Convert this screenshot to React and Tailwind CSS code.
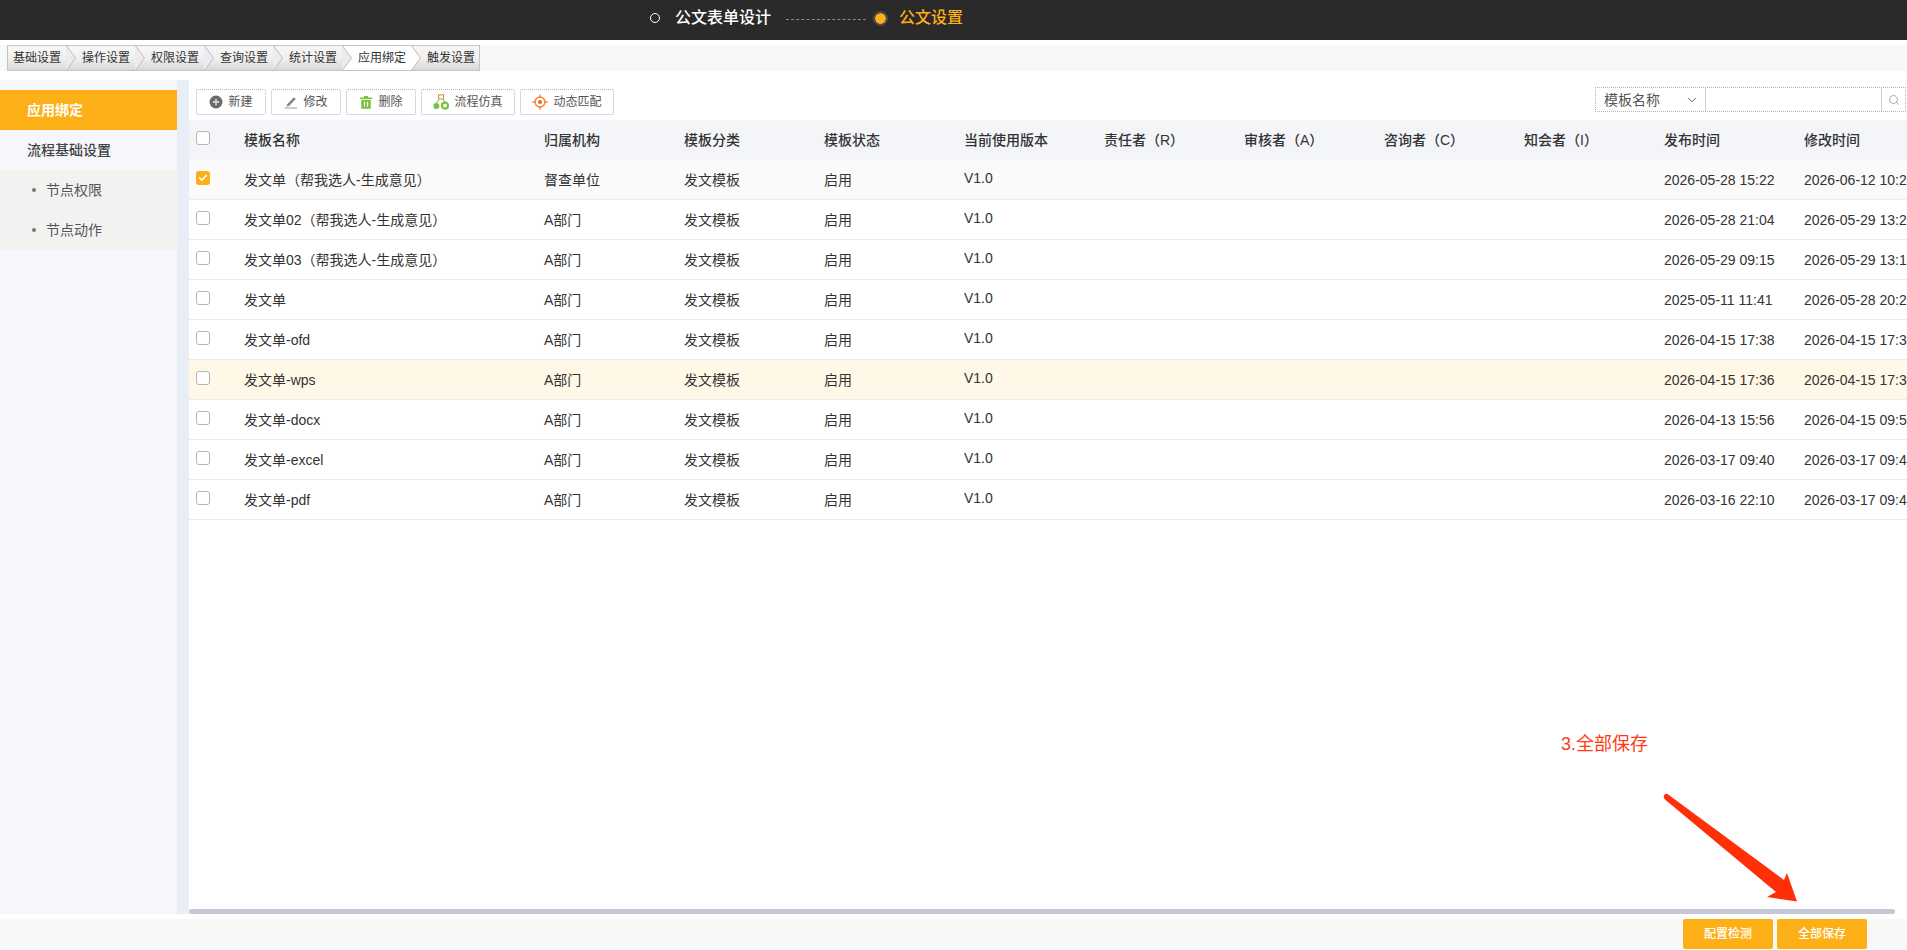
import { ChevronDown, Search, Check } from 'lucide-react';

const TABS = ['基础设置', '操作设置', '权限设置', '查询设置', '统计设置', '应用绑定', '触发设置'];
const HEADS = ['模板名称', '归属机构', '模板分类', '模板状态', '当前使用版本', '责任者（R）', '审核者（A）', '咨询者（C）', '知会者（I）', '发布时间', '修改时间'];
const ROWS = [
  ['发文单（帮我选人-生成意见）', '督查单位', '2026-05-28 15:22', '2026-06-12 10:24'],
  ['发文单02（帮我选人-生成意见）', 'A部门', '2026-05-28 21:04', '2026-05-29 13:21'],
  ['发文单03（帮我选人-生成意见）', 'A部门', '2026-05-29 09:15', '2026-05-29 13:19'],
  ['发文单', 'A部门', '2025-05-11 11:41', '2026-05-28 20:21'],
  ['发文单-ofd', 'A部门', '2026-04-15 17:38', '2026-04-15 17:38'],
  ['发文单-wps', 'A部门', '2026-04-15 17:36', '2026-04-15 17:36'],
  ['发文单-docx', 'A部门', '2026-04-13 15:56', '2026-04-15 09:56'],
  ['发文单-excel', 'A部门', '2026-03-17 09:40', '2026-03-17 09:40'],
  ['发文单-pdf', 'A部门', '2026-03-16 22:10', '2026-03-17 09:40'],
];

function Box({ checked }) {
  if (checked) {
    return (
      <span className="flex h-[14px] w-[14px] items-center justify-center rounded-[3px] bg-[#fcaf17] text-white">
        <Check size={10} strokeWidth={4} />
      </span>
    );
  }
  return <span className="block h-[14px] w-[14px] rounded-[3px] border border-[#b4b4b8] bg-white" />;
}

function AddIcon() {
  return (
    <svg width="14" height="14" viewBox="0 0 14 14">
      <circle cx="7" cy="7" r="6.5" fill="#6a6a6a" />
      <path d="M7 3.8v6.4M3.8 7h6.4" stroke="#ccc" strokeWidth="1.8" />
    </svg>
  );
}

function EditIcon() {
  return (
    <svg width="14" height="14" viewBox="0 0 14 14">
      <path d="M3.2 9.2 9.8 2.2l2 1.9-6.7 6.9-2.6.5z" fill="#888" />
      <path d="M0.5 13h12.5" stroke="#aaa" strokeWidth="1.2" />
    </svg>
  );
}

function TrashIcon() {
  return (
    <svg width="14" height="14" viewBox="0 0 14 14">
      <path d="M0.8 2.6h12.4v1.4H0.8zM5 1h4v1.4H5z" fill="#7cc242" />
      <path d="M2.2 4.8h9.6v9H2.2z" fill="#7cc242" />
      <path d="M5.5 6.8v4.6M8.5 6.8v4.6" stroke="#fff" strokeWidth="1.2" />
    </svg>
  );
}

function FlowIcon() {
  return (
    <svg width="16" height="16" viewBox="0 0 16 16">
      <rect x="5.6" y="0.8" width="5" height="4.2" fill="#fff" stroke="#d9a05a" strokeWidth="1.2" />
      <path d="M6 5.2 3.5 9M10 5.2l2 3" stroke="#8cc152" strokeWidth="1.1" fill="none" />
      <circle cx="3.4" cy="12" r="3" fill="#7cc242" />
      <circle cx="12" cy="11.6" r="3" fill="#fff" stroke="#7cc242" strokeWidth="2.2" />
    </svg>
  );
}

function TargetIcon() {
  return (
    <svg width="16" height="16" viewBox="0 0 16 16">
      <circle cx="8" cy="8" r="5" fill="none" stroke="#f58232" strokeWidth="1.4" />
      <circle cx="8" cy="8" r="2" fill="#f0641e" />
      <path d="M8 0.5v3.2M8 12.3v3.2M0.5 8h3.2M12.3 8h3.2" stroke="#f58232" strokeWidth="1.4" />
    </svg>
  );
}

function ToolBtn({ w, icon, label }) {
  return (
    <button className={`flex h-[26px] items-center justify-center gap-[5px] rounded-[2px] border border-dotted border-[#b4b6be] bg-white text-xs text-[#555] ${w}`}>
      {icon}
      <span>{label}</span>
    </button>
  );
}

function Breadcrumb() {
  return (
    <div className="mt-[5px] flex h-[26px] bg-[#f8f8f8] pl-[7px]">
      {TABS.map((t, i) => {
        const active = t === '应用绑定';
        const last = i === TABS.length - 1;
        return (
          <div
            key={t}
            className={`relative flex h-[26px] items-center border-y border-[#c4c4c4] text-xs text-[#333] ${
              active ? 'bg-white' : 'bg-linear-to-b from-[#f7f7f7] via-[#f0f0f0] to-[#d9d9d9]'
            } ${i === 0 ? 'w-[59px] border-l pl-[5px]' : 'w-[69px] pl-[16px]'} ${last ? 'border-r' : ''}`}
          >
            <span className="whitespace-nowrap">{t}</span>
            {!last && (
              <svg className="absolute right-[-10px] top-[-1px] z-10" width="10" height="26" viewBox="0 0 10 26">
                <path d="M0 0 9.5 13 0 26z" fill={active ? '#fff' : '#ececec'} />
                <path d="M0 0 9.5 13 0 26" fill="none" stroke="#bdbdbd" />
              </svg>
            )}
          </div>
        );
      })}
    </div>
  );
}

function Sidebar() {
  return (
    <aside className="w-[177px] shrink-0 bg-[#f5f7fb] pt-[10px] text-sm">
      <div className="flex h-10 items-center bg-[#fcaf17] pl-[27px] font-bold text-white">应用绑定</div>
      <div className="flex h-10 items-center pl-[27px] font-medium text-[#444]">流程基础设置</div>
      <div className="bg-[#f2f2f1] text-[#555]">
        {['节点权限', '节点动作'].map((t) => (
          <div key={t} className="flex h-10 items-center pl-[32px]">
            <span className="mr-[10px] h-1 w-1 rounded-full bg-[#777]" />
            {t}
          </div>
        ))}
      </div>
    </aside>
  );
}

function Table() {
  return (
    <div className="min-h-0 flex-1 overflow-hidden">
      <table className="w-[1755px] table-fixed border-separate border-spacing-0 text-sm text-[#333]">
        <colgroup>
          <col className="w-[55px]" />
          <col className="w-[300px]" />
          {HEADS.slice(1).map((h) => (
            <col key={h} className="w-[140px]" />
          ))}
        </colgroup>
        <thead>
          <tr className="h-10 bg-[#f4f5f9]">
            <th className="pb-1 pl-[7px] text-left font-normal">
              <Box />
            </th>
            {HEADS.map((h) => (
              <th key={h} className="text-left font-medium text-[#333]">
                {h}
              </th>
            ))}
          </tr>
        </thead>
        <tbody>
          {ROWS.map((r, i) => (
            <tr
              key={r[0]}
              className={`h-10 [&>td]:border-b [&>td]:border-[#ececec] ${i === 0 ? 'bg-[#fafafa]' : i === 5 ? 'bg-[#fff8e6]' : 'bg-white'}`}
            >
              <td className="pb-1 pl-[7px]">
                <Box checked={i === 0} />
              </td>
              <td className="whitespace-nowrap">{r[0]}</td>
              <td>{r[1]}</td>
              <td>发文模板</td>
              <td>启用</td>
              <td className="pb-1">V1.0</td>
              <td />
              <td />
              <td />
              <td />
              <td className="whitespace-nowrap">{r[2]}</td>
              <td className="whitespace-nowrap">{r[3]}</td>
            </tr>
          ))}
        </tbody>
      </table>
    </div>
  );
}

export default function App() {
  return (
    <div className="relative flex h-[950px] w-[1907px] flex-col overflow-hidden bg-white font-['Liberation_Sans','Noto_Sans_CJK_SC',sans-serif]">
      {/* 顶部步骤条 */}
      <header className="flex h-10 shrink-0 items-center bg-[#2a2a2a] pb-[4px] pl-[650px] text-base">
        <span className="h-[10px] w-[10px] rounded-full border-[1.5px] border-white" />
        <span className="ml-[15px] font-medium text-white">公文表单设计</span>
        <span className="ml-[15px] mt-[2px] w-[80px] border-t border-dashed border-[#8a8a8a]" />
        <span className="ml-[9px] h-[11px] w-[11px] rounded-full bg-[#fcaf17] outline-2 outline-[#4a4a4a]" />
        <span className="ml-[13px] font-medium text-[#fcaf17]">公文设置</span>
      </header>

      <Breadcrumb />

      <div className="mt-[9px] flex min-h-0 flex-1">
        <Sidebar />
        <div className="w-3 shrink-0 bg-[#e9edf6]" />
        <main className="flex min-w-0 flex-1 flex-col">
          <div className="flex h-10 shrink-0 items-start justify-between pl-[7px] pt-[9px]">
            <div className="flex gap-[5px]">
              <ToolBtn w="w-[70px]" icon={<AddIcon />} label="新建" />
              <ToolBtn w="w-[70px]" icon={<EditIcon />} label="修改" />
              <ToolBtn w="w-[70px]" icon={<TrashIcon />} label="删除" />
              <ToolBtn w="w-[94px]" icon={<FlowIcon />} label="流程仿真" />
              <ToolBtn w="w-[94px]" icon={<TargetIcon />} label="动态匹配" />
            </div>
            <div className="mr-px mt-[-2px] flex h-[25px] w-[311px] border border-dotted border-[#b4b4b4] text-sm text-[#555]">
              <div className="flex w-[110px] items-center justify-between border-r border-[#d0d0d0] pl-2 pr-[6px]">
                <span>模板名称</span>
                <ChevronDown size={14} strokeWidth={1.5} className="text-[#444]" />
              </div>
              <div className="flex-1" />
              <div className="flex w-6 items-center justify-center border-l border-[#d0d0d0] text-[#aaa]">
                <Search size={12} />
              </div>
            </div>
          </div>
          <Table />
          <div className="mr-3 h-[5px] shrink-0 rounded-sm bg-[#c3c9d5]" />
        </main>
      </div>

      <div className="h-[5px] shrink-0" />

      {/* 底部按钮 */}
      <footer className="flex h-[31px] shrink-0 justify-end gap-1 bg-[#f8f8f8] pb-px pr-10">
        {['配置检测', '全部保存'].map((t) => (
          <button key={t} className="w-[90px] rounded-[2px] bg-[#fcaf17] text-xs font-medium text-white">
            {t}
          </button>
        ))}
      </footer>

      {/* 标注 */}
      <span className="absolute left-[1561px] top-[731px] text-lg leading-[26px] text-[#ff3a12]">3.全部保存</span>
      <svg className="absolute left-[1650px] top-[780px]" width="160" height="140" viewBox="0 0 160 140">
        <path
          d="M17.5 14 Q15 13 14 15.5 Q13 17.5 15 19.5 L126 112 L117 117 L147 121.5 L137 93 L134 100 Z"
          fill="#ff3008"
        />
      </svg>
    </div>
  );
}
